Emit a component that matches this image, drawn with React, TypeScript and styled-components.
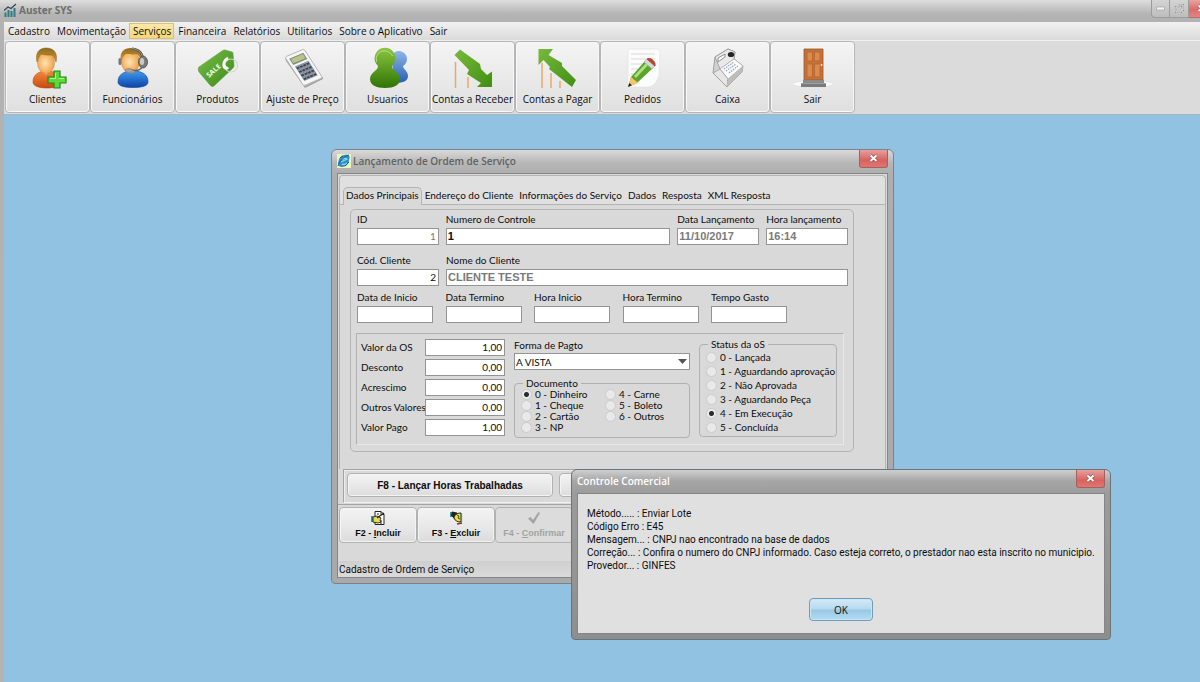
import React from "react";
import styled, { createGlobalStyle, css } from "styled-components";

const ui = `"Open Sans", "Noto Sans", sans-serif`;
const plain = `Roboto, "Liberation Sans", sans-serif`;
const classic = `Lato, "Liberation Sans", sans-serif`;
const classicWide = `"Liberation Sans", Arial, sans-serif`;

const GlobalStyle = createGlobalStyle`
  *, *::before, *::after { box-sizing: border-box; }
  body { margin: 0; font-family: ${ui}; font-size: 10px; color: #0c0c0c; }
  button, input, select { font: inherit; color: inherit; margin: 0; }
  fieldset { margin: 0; min-width: 0; }
`;

/* ---------- application shell ---------- */

const Shell = styled.div`
  min-height: 100vh;
  display: flex;
  flex-direction: column;
  padding-left: 4px;
  background: linear-gradient(#dedede, #b4b4b4 14px, #b2b2b2 22px, #b4b4b4);
  overflow: hidden;
`;

const AppTitleBar = styled.header`
  height: 22px;
  display: flex;
  align-items: flex-start;
  gap: 2px;
`;

const AppTitle = styled.h1`
  flex: 1;
  margin: 0;
  font-size: 10px;
  line-height: 21px;
  font-weight: 700;
  color: #6e6e6e;
`;

const WindowControls = styled.div`
  display: flex;
  margin-right: -15px;
`;

const WindowControl = styled.button<{ $close?: boolean }>`
  width: ${(p) => (p.$close ? 26 : 19)}px;
  height: 18px;
  padding: 0;
  display: flex;
  align-items: center;
  justify-content: center;
  border: 1px solid ${(p) => (p.$close ? "#b96a6a" : "#9c9c9c")};
  border-top: 0;
  border-left-width: 0;
  background: ${(p) =>
    p.$close
      ? "linear-gradient(#e8a3a0, #dc6c69 55%, #e28380)"
      : "linear-gradient(#d4d4d4, #bdbdbd)"};
  &:first-child { border-left-width: 1px; border-bottom-left-radius: 4px; }
`;

const MenuBar = styled.nav`
  height: 18px;
  padding-top: 1px;
  display: flex;
  align-items: flex-start;
  background: linear-gradient(#f1f1f1, #dadada);
`;

const MenuItem = styled.button<{ $active?: boolean }>`
  height: 16px;
  padding: 0 2px 0 3px;
  border: 1px solid ${(p) => (p.$active ? "#dcc078" : "transparent")};
  background: ${(p) => (p.$active ? "linear-gradient(#fbe9a8, #f3d67c)" : "none")};
  line-height: 13px;
  white-space: nowrap;
`;

const ToolBar = styled.div`
  height: 75px;
  padding: 0 1px 3px;
  display: flex;
  background: #dbdbdb;
  border-top: 1px solid #efefef;
  border-bottom: 1px solid #a9b6be;
`;

const ToolButton = styled.button`
  width: 85px;
  height: 72px;
  padding: 5px 0 0;
  display: flex;
  flex-direction: column;
  align-items: center;
  gap: 3px;
  border: 1px solid #b5b5b5;
  border-radius: 4px;
  background: linear-gradient(#f4f4f4, #ebebeb 45%, #dfdfdf);
  box-shadow: inset 0 0 0 1px #f8f8f8;
  font-size: 10px;
  line-height: 14px;
  font-weight: 500;
  white-space: nowrap;
`;

const Desktop = styled.main`
  flex: 1;
  position: relative;
  background: #92c2e1;
`;

/* ---------- windows placed on the desktop ---------- */

const Window = styled.section<{ $x: number; $y: number; $w: number; $front?: boolean }>`
  position: absolute;
  left: ${(p) => p.$x}px;
  top: ${(p) => p.$y}px;
  width: ${(p) => p.$w}px;
  display: flex;
  flex-direction: column;
  padding: 0 5px 5px;
  border: 1px solid ${(p) => (p.$front ? "#6d7478" : "#7b8387")};
  border-radius: 6px 6px 4px 4px;
  background: ${(p) =>
    p.$front
      ? "linear-gradient(#cfcfcf, #a6a6a6 11px, #9b9b9b 24px, #8d8f8f)"
      : "linear-gradient(#dadada, #b6b6b6 13px, #aeaeae 24px, #a9a9a9)"};
`;

const WindowBar = styled.header`
  height: 23px;
  display: flex;
  align-items: flex-start;
  gap: 2px;
`;

const WindowTitle = styled.h2<{ $front?: boolean }>`
  flex: 1;
  margin: 0;
  font-size: 10px;
  line-height: 22px;
  font-weight: 600;
  color: ${(p) => (p.$front ? "#ffffff" : "#626262")};
`;

const CloseButton = styled.button`
  width: 29px;
  height: 18px;
  padding: 0;
  display: flex;
  align-items: center;
  justify-content: center;
  border: 1px solid #a95f5f;
  border-top: 0;
  border-radius: 0 0 3px 3px;
  background: linear-gradient(#e6a09e, #d9625f 60%, #df7674);
`;

const ClientArea = styled.div`
  display: flex;
  flex-direction: column;
  border: 1px solid #858585;
  background: #d9d9d9;
`;

/* ---------- service order form ---------- */

const PageControl = styled.div`
  margin: 1px 1px 0;
  height: 294px;
  border: 1px solid #b4b4b4;
  border-bottom: 0;
  border-radius: 4px 4px 0 0;
  background: #d9d9d9;
`;

const TabStrip = styled.div`
  height: 29px;
  padding: 11px 3px 0;
  display: flex;
  align-items: flex-start;
  background: #e0e0e0;
  box-shadow: inset 0 -1px #b4b4b4;
  border-radius: 4px 4px 0 0;
`;

const Tab = styled.button<{ $active?: boolean }>`
  height: 18px;
  padding: 0 2px 2px;
  font-family: ${classic};
  font-size: 10px;
  line-height: 15px;
  white-space: nowrap;
  border: 1px solid ${(p) => (p.$active ? "#b4b4b4" : "transparent")};
  border-bottom: 0;
  border-radius: 5px 5px 0 0;
  background: ${(p) => (p.$active ? "#d9d9d9" : "none")};
`;

const FormBox = styled.form`
  margin: 4px 0 0 10px;
  width: 504px;
  height: 243px;
  padding: 2px 5px 0 6px;
  border: 1px solid #b4b4b4;
  border-radius: 5px;
  font-family: ${classic};
  font-size: 10px;
`;

const FieldRow = styled.div<{ $top?: number; $spread?: number }>`
  display: flex;
  gap: 7px;
  width: ${(p) => (p.$spread ? `${p.$spread}px` : "auto")};
  justify-content: space-between;
  margin-top: ${(p) => p.$top ?? 0}px;
`;

const Field = styled.div<{ $w: number }>`
  width: ${(p) => p.$w}px;
  display: flex;
  flex-direction: column;
  gap: 1px;
`;

const Label = styled.label`
  line-height: 15px;
  white-space: nowrap;
`;

const TextBox = styled.input<{ $right?: boolean; $bold?: boolean; $dim?: boolean }>`
  width: 100%;
  height: 17px;
  padding: 0 2px 1px 1px;
  border: 1px solid #949494;
  border-radius: 0;
  background: #fff;
  text-align: ${(p) => (p.$right ? "right" : "left")};
  color: ${(p) => (p.$dim ? "#7a7a7a" : "#0c0c0c")};
  ${(p) =>
    p.$bold &&
    css`
      font-family: ${classicWide};
      font-size: 11px;
      font-weight: 700;
    `}
`;

const ValuesPanel = styled.div`
  margin: 10px 4px 0 -1px;
  height: 112px;
  padding: 4px 5px 0 4px;
  display: flex;
  align-items: flex-start;
  border: 1px solid #b0b0b0;
  border-right-color: #e8e8e8;
  border-bottom-color: #e8e8e8;
`;

const AmountGrid = styled.div`
  width: 144px;
  padding-top: 1px;
  display: grid;
  grid-template-columns: 64px 80px;
  grid-auto-rows: 17px;
  row-gap: 3px;
  align-items: center;
`;

const PaymentColumn = styled.div`
  width: 176px;
  margin-left: 9px;
`;

const Combo = styled.div`
  position: relative;
  svg { position: absolute; right: 3px; top: 6px; pointer-events: none; }
`;

const Select = styled.select`
  display: block;
  width: 100%;
  height: 17px;
  padding: 0 1px;
  appearance: none;
  border: 1px solid #949494;
  border-radius: 0;
  background: #fff;
`;

const OptionGroup = styled.fieldset<{ $h: number; $top: number }>`
  height: ${(p) => p.$h}px;
  margin-top: ${(p) => p.$top}px;
  padding: 0 0 0 6px;
  border: 1px solid #b0b0b0;
  border-radius: 4px;
  legend {
    margin-left: 2px;
    padding: 0 3px;
    line-height: 12px;
  }
`;

const OptionGrid = styled.div<{ $row: number; $rows: number; $col?: number }>`
  display: grid;
  grid-auto-flow: column;
  grid-template-rows: repeat(${(p) => p.$rows}, ${(p) => p.$row}px);
  grid-auto-columns: ${(p) => (p.$col ? `${p.$col}px` : "auto")};
`;

const Option = styled.label`
  display: flex;
  align-items: center;
  gap: 3px;
  line-height: 11px;
  white-space: nowrap;
`;

const Radio = styled.input`
  appearance: none;
  flex: none;
  width: 11px;
  height: 11px;
  border: 1px solid #cbcbcb;
  border-radius: 50%;
  background: #e9e9e9;
  &:checked { background: radial-gradient(circle, #2b2b2b 2px, #ececec 3px); }
`;

const StatusColumn = styled.div`
  width: 138px;
  margin-left: 9px;
`;

const ActionStrip = styled.div`
  height: 34px;
  margin: 0 0 0 5px;
  padding: 3px;
  display: flex;
  gap: 6px;
  border: 1px solid #a4a4a4;
  border-bottom-color: #f2f2f2;
  box-shadow: inset 1px 1px #ececec;
`;

const buttonFace = css`
  border: 1px solid #b2b2b2;
  border-radius: 4px;
  background: linear-gradient(#f3f3f3, #e9e9e9 50%, #dcdcdc);
  box-shadow: inset 0 0 0 1px #f4f4f4;
`;

const WideButton = styled.button`
  ${buttonFace}
  width: 206px;
  height: 24px;
  padding: 0;
  font-family: ${classicWide};
  font-size: 10px;
  font-weight: 700;
`;

const RecordBar = styled.div`
  height: 57px;
  margin-top: 1px;
  padding: 2px 0 0 1px;
  display: flex;
  align-items: flex-start;
  border-top: 1px solid #a4a4a4;
`;

const RecordButton = styled.button`
  ${buttonFace}
  width: 78px;
  height: 36px;
  padding: 2px 0 0;
  display: flex;
  flex-direction: column;
  align-items: center;
  font-family: ${classicWide};
  font-size: 9px;
  line-height: 15px;
  font-weight: 700;
  white-space: nowrap;
  &:disabled { color: #a2a2a2; background: #dcdcdc; box-shadow: none; }
`;

const StatusBar = styled.footer`
  height: 16px;
  padding-left: 1px;
  background: linear-gradient(#cfcfcf, #dadada);
  line-height: 18px;
  font-family: ${plain};
`;

/* ---------- message box ---------- */

const MessageArea = styled(ClientArea)`
  height: 141px;
  padding-top: 13px;
  background: #e0e0e0;
`;

const MessageText = styled.p`
  margin: 0;
  padding-left: 9px;
  flex: 1;
  line-height: 13px;
  font-family: ${plain};
  white-space: pre;
`;

const OkButton = styled.button`
  width: 64px;
  height: 23px;
  margin: 0 auto 12px;
  padding: 0;
  border: 1px solid #6f9dbb;
  border-radius: 4px;
  background: linear-gradient(#d6eaf6, #b5d9ef 48%, #98c8e6 52%, #b4dcf1);
  box-shadow: inset 0 0 0 1px #c9e5f5;
`;

/* ---------- drawings ---------- */

const Art = ({ children }: { children: React.ReactNode }) => (
  <svg width="42" height="42" viewBox="0 0 42 42" fill="none" aria-hidden="true">
    {children}
  </svg>
);

const ClientArt = () => (
  <Art>
    <defs>
      <radialGradient id="cSkin" cx=".45" cy=".5"><stop stopColor="#ffe3b4" /><stop offset="1" stopColor="#f2a64f" /></radialGradient>
      <linearGradient id="cBody" x2="0" y2="1"><stop stopColor="#f28a3c" /><stop offset="1" stopColor="#c94a12" /></linearGradient>
      <linearGradient id="cHair" x2="0" y2="1"><stop stopColor="#8f6a1c" /><stop offset="1" stopColor="#d29a35" /></linearGradient>
    </defs>
    <path d="M6 35c0-7 5-11 14-11s13 5 13 11c0 4-5 6-13 6S6 39 6 35z" fill="url(#cBody)" stroke="#b7461a" strokeWidth=".6" />
    <path d="M15 23l4 5 4-5z" fill="#d9c9bb" />
    <ellipse cx="19" cy="16" rx="8.5" ry="10.5" fill="url(#cSkin)" stroke="#c98532" strokeWidth=".5" />
    <path d="M10 15C8 6 12 1 19 1c8 0 12 5 10 14-1-3-2-5-4-7-4 0-8 0-11-1-2 2-3 5-4 8z" fill="url(#cHair)" stroke="#7f5c18" strokeWidth=".5" />
    <path d="M27 24h6v6h6v6h-6v5h-6v-5h-6v-6h6z" fill="#5fd83a" stroke="#1f8a16" strokeWidth="1.2" />
    <path d="M28.5 26v5.500H23M32 31.500h5" stroke="#b8f59a" strokeWidth="1" />
  </Art>
);

const StaffArt = () => (
  <Art>
    <defs>
      <linearGradient id="sBody" x2="0" y2="1"><stop stopColor="#3f9bf0" /><stop offset="1" stopColor="#0b44a8" /></linearGradient>
    </defs>
    <path d="M6 35c0-7 5-11 15-11s15 4 15 11c0 4-6 5.500-15 5.500S6 39 6 35z" fill="url(#sBody)" stroke="#0d3f94" strokeWidth=".6" />
    <ellipse cx="18.500" cy="15" rx="9" ry="11" fill="url(#cSkin)" stroke="#c98532" strokeWidth=".5" />
    <path d="M9 14C7 5 12 1 19 1c9 0 14 4 12 14-2-3-4-6-6-8-4 1-8 0-11 0-2 1-4 4-5 7z" fill="url(#cHair)" />
    <path d="M20 1.500c7 1 11 5 11 12" stroke="#4e4e4e" strokeWidth="2.200" />
    <path d="M20 1.500c7 1 11 5 11 12" stroke="#b5b5b5" strokeWidth=".8" />
    <ellipse cx="31" cy="15" rx="4.500" ry="6" fill="#7a7a7a" stroke="#4a4a4a" strokeWidth=".8" />
    <ellipse cx="30" cy="14.500" rx="2.200" ry="3.500" fill="#c9c9c9" />
    <rect x="6.500" y="11" width="3" height="7" rx="1.500" fill="#777" />
    <path d="M30 20c-2 4-6 4-11 3" stroke="#666" strokeWidth="1.500" />
    <ellipse cx="17" cy="23.500" rx="4" ry="2" fill="#a8a29c" stroke="#77706a" strokeWidth=".5" />
  </Art>
);

const ProductArt = () => (
  <Art>
    <defs>
      <linearGradient id="pTag" x2="1" y2="1"><stop stopColor="#79bd4a" /><stop offset="1" stopColor="#3c8a17" /></linearGradient>
    </defs>
    <path d="M2 20L25 4c1-1 2-1 3-1l7 2c1 0 1 1 1 2l1 11c0 1 0 2-1 3L18 38c-2 2-3 2-5 0L2 25c-1-2-1-4 0-5z" fill="url(#pTag)" stroke="#5c9d36" strokeWidth=".6" />
    <circle cx="34" cy="18.500" r="6.500" stroke="#d2d2d2" strokeWidth="1.100" />
    <path d="M30 10c-5 3-6 9-3 12 2 1 4 1 5-1l-3-2c-1-2-1-5 2-6 1-1 0-3-1-3z" fill="#fff" />
    <text x="12" y="31" transform="rotate(-42 12 31)" fill="#f3fbe9" fontFamily="Open Sans, sans-serif" fontWeight="700" fontSize="7">SALE</text>
  </Art>
);

const PriceArt = () => (
  <Art>
    <path d="M3 11l1 3 19 27 18-9v-2L23 39z" fill="#a2a2a2" />
    <g transform="matrix(1 -.42 .58 .9 3 10)">
      <rect width="19" height="32" rx="1.500" fill="#f6f6f6" stroke="#a9a9a9" strokeWidth=".7" />
      <rect x="2.500" y="3" width="14" height="7" fill="#838c7c" />
      <rect x="3.500" y="4" width="12" height="4.500" fill="#b9c48c" />
      <rect x="3" y="12" width="13.500" height="16" fill="#8a8f97" />
      <path d="M3.500 14h12.500M3.500 18h12.500M3.500 22h12.500M3.500 26h12.500" stroke="#3a4454" strokeWidth="2.400" strokeDasharray="2.400 .9" />
      <path d="M3.500 13h12.500M3.500 17h12.500M3.500 21h12.500M3.500 25h12.500" stroke="#a9b6c8" strokeWidth=".7" strokeDasharray="2.400 .9" />
    </g>
  </Art>
);

const UsersArt = () => (
  <Art>
    <defs>
      <linearGradient id="uGreen" x2="0" y2="1"><stop stopColor="#8cc63f" /><stop offset="1" stopColor="#2f7406" /></linearGradient>
      <linearGradient id="uBlue" x2="0" y2="1"><stop stopColor="#8fb6e6" /><stop offset="1" stopColor="#255fb3" /></linearGradient>
    </defs>
    <path d="M24 12a8 8 0 1 1 12 7c0 3 5 5 5 10s-5 7-12 7z" fill="url(#uBlue)" />
    <path d="M11 19A10.500 10.500 0 1 1 25 19c0 5 8 6 8 13 0 6-6 9-15 9S3 38 3 32c0-7 8-8 8-13z" fill="url(#uGreen)" />
    <path d="M9.500 15a9 9 0 0 1 2-9 9 9 0 0 1 14 3" stroke="#c4e69c" strokeWidth=".8" />
  </Art>
);

const ReceiveArt = () => (
  <Art>
    <defs>
      <linearGradient id="aGreen" x2="1" y2="1"><stop stopColor="#79b93c" /><stop offset="1" stopColor="#3f8f12" /></linearGradient>
    </defs>
    <path d="M3.500 15v26M16 30v11" stroke="#efa860" strokeWidth="1.500" />
    <path d="M2.500 8L8 2.500 28 17l1 5 6 6 5-3.500V40H25l4-4-14-9 2-4z" fill="url(#aGreen)" />
  </Art>
);

const PayArt = () => (
  <Art>
    <path d="M5 16v25M14 26v15M23 34v7" stroke="#efa860" strokeWidth="1.500" />
    <path d="M1.500 2H16l-4.500 6L25 16v3l14 14-4 7-23-18 1-2-6.500-7-5 5z" fill="url(#aGreen)" />
  </Art>
);

const OrdersArt = () => (
  <Art>
    <path d="M6 4c0-1 1-2 2-2h27c1 0 3 1 3 3l-1 23c-2 8-6 11-10 12H8c-1 0-2-1-2-2z" fill="#fcfcfc" stroke="#e3e3e3" strokeWidth=".7" />
    <path d="M9 7h24M9 12h24M9 17h18M9 22h14M9 27h8" stroke="#d5d9dd" strokeWidth="1" />
    <path d="M6 40l3-10 14-16 8 7-16 15z" fill="#5ca52c" />
    <path d="M12 29l13-14 2 2-13 14z" fill="#b3dd86" />
    <path d="M6 40l3-10 7 6z" fill="#f3c66e" />
    <path d="M6 40l1.300-4 2.700 2.300z" fill="#222" />
    <path d="M22 15l3-3 8 7-3 3z" fill="#d4d8dc" stroke="#9a9a9a" strokeWidth=".5" />
    <path d="M25 12c3-2 9 2 8 7z" fill="#b9452c" stroke="#b9452c" />
  </Art>
);

const RegisterArt = () => (
  <Art>
    <path d="M6 26L8 10 21 2l7 3-1 7 9 7-1 6-15 15z" fill="#d2d2d2" stroke="#8e8e8e" strokeWidth=".8" />
    <path d="M8 10l13-8 7 3-1 7-14 10z" fill="#e9e9e9" stroke="#8a8a8a" strokeWidth=".7" />
    <path d="M11 11l7-4v3l-7 5z" fill="#f8f8f8" stroke="#777" strokeWidth=".8" />
    <ellipse cx="24" cy="7.500" rx="3.200" ry="2.600" fill="#242424" />
    <path d="M13 22l14-10 9 7-15 13z" fill="#fafafa" stroke="#aaa" strokeWidth=".6" />
    <path d="M17 22l10-7M19 24l10-7M22 26l9-7" stroke="#8fa3b8" strokeWidth="1.200" strokeDasharray="1.500 1" />
    <path d="M6 26l7-4 8 10-1 8zM20 34l15-13" stroke="#999" strokeWidth=".8" fill="#e6e6e6" />
    <path d="M20 40l1-8 15-13-1 6z" fill="#bdbdbd" />
  </Art>
);

const DoorArt = () => (
  <Art>
    <ellipse cx="21" cy="37" rx="20" ry="3.500" fill="#fafafa" stroke="#d4d4d4" strokeWidth=".5" />
    <path d="M12 2h19v31H12z" fill="#c87137" stroke="#8e5a35" strokeWidth=".8" />
    <path d="M15 5h5.500v9H15zM22.500 5H28v9h-5.500zM15 17h5.500v13H15zM22.500 17H28v13h-5.500z" fill="#d98a4c" stroke="#b0612c" strokeWidth=".7" />
    <circle cx="29.500" cy="18" r="1" fill="#f1e5d0" />
    <path d="M11 33h21v3H11z" fill="#8b8b8b" />
    <path d="M9 36h25v4H9z" fill="#7b7b7b" />
    <path d="M9 36.500h25" stroke="#a8a8a8" strokeWidth=".8" />
  </Art>
);

const Logo = () => (
  <svg width="13" height="22" viewBox="0 0 13 22" fill="none" aria-hidden="true">
    <path d="M.5 12.500h2V17h-2zM3.500 10h2v7h-2zM6.500 11h2v6h-2zM9.500 8h2v9h-2z" fill="#2f7f86" />
    <path d="M0 10.500L4 7l3 1.500L12 4" stroke="#31454c" strokeWidth="1.100" />
  </svg>
);

const FormIconArt = styled.svg`
  margin-top: 4px;
`;

const FormIcon = () => (
  <FormIconArt width="14" height="14" viewBox="0 0 14 14" fill="none" aria-hidden="true">
    <path d="M0 0h14v14H0z" fill="#f0f4b4" />
    <path d="M2 5c2-4 6-5 9-4 2 1 2 3 1 5 0 4-3 7-7 7-3 0-4-2-4-4z" fill="#2a92cb" />
    <path d="M5 6c1-2 4-2 5-1L4 8M5 10c2 1 4 0 5-1" stroke="#8fd4f0" strokeWidth="1.200" />
    <path d="M1 12C2 8 7 2 12 1M3 4l3-2M8 12l4-4" stroke="#14608f" strokeWidth="1" />
  </FormIconArt>
);

const Cross = ({ size = 9 }: { size?: number }) => (
  <svg width={size} height={size} viewBox="0 0 9 9" fill="none" aria-hidden="true">
    <path d="M1.500 1.500l6 5.500M7.500 1.500l-6 5.500" stroke="#8d4a4a" strokeWidth="3.200" />
    <path d="M1.500 1.500l6 5.500M7.500 1.500l-6 5.500" stroke="#fff" strokeWidth="2" />
  </svg>
);

const IncludeArt = () => (
  <svg width="16" height="16" viewBox="0 0 16 16" fill="none" aria-hidden="true">
    <path d="M5 1.500h6l3 3v10H5z" fill="#fff" stroke="#222" />
    <path d="M11 1.500v3h3M7 4h2M9 11h3M10 13h2" stroke="#222" />
    <path d="M1 6h2v6H1z" fill="#2b9b9b" />
    <path d="M3 7l4-1 4 2-1 2 1 2-3 1-5-1z" fill="#e8dc4a" stroke="#222" strokeWidth=".9" />
    <path d="M7 8l7-5" stroke="#222" strokeWidth="1.300" />
  </svg>
);

const DeleteArt = () => (
  <svg width="16" height="16" viewBox="0 0 16 16" fill="none" aria-hidden="true">
    <path d="M2 2h2v5H2z" fill="#2b9b9b" />
    <path d="M4 1.500l5 1 1 4-4 2-3-3z" fill="#222" />
    <path d="M6 8c0-3 3-5 7-5v9c-3 0-6-1-7-4z" fill="#e8e23c" stroke="#222" strokeWidth="1" />
    <path d="M9 5l2 1-1 2 2 1" stroke="#222" strokeWidth=".8" />
    <path d="M9 14l5-1" stroke="#9c2b2b" strokeWidth="1.500" />
    <path d="M13.500 3v10" stroke="#2b9b9b" strokeWidth="1.200" />
  </svg>
);

const CheckArt = () => (
  <svg width="16" height="16" viewBox="0 0 16 16" fill="none" aria-hidden="true">
    <path d="M2 8.500L4.500 7 7 10l5.500-8 1.500 1L7.500 14z" fill="#a3a3a3" />
  </svg>
);

/* ---------- data ---------- */

const menus = ["Cadastro", "Movimentação", "Serviços", "Financeira", "Relatórios", "Utilitarios", "Sobre o Aplicativo", "Sair"];

const tools: [string, () => React.JSX.Element][] = [
  ["Clientes", ClientArt],
  ["Funcionários", StaffArt],
  ["Produtos", ProductArt],
  ["Ajuste de Preço", PriceArt],
  ["Usuarios", UsersArt],
  ["Contas a Receber", ReceiveArt],
  ["Contas a Pagar", PayArt],
  ["Pedidos", OrdersArt],
  ["Caixa", RegisterArt],
  ["Sair", DoorArt],
];

const tabs = ["Dados Principais", "Endereço do Cliente", "Informações do Serviço", "Dados", "Resposta", "XML Resposta"];
const periods = ["Data de Inicio", "Data Termino", "Hora Inicio", "Hora Termino", "Tempo Gasto"];
const amounts: [string, string][] = [
  ["Valor da OS", "1,00"],
  ["Desconto", "0,00"],
  ["Acrescimo", "0,00"],
  ["Outros Valores", "0,00"],
  ["Valor Pago", "1,00"],
];
const documents = ["0 - Dinheiro", "1 - Cheque", "2 - Cartão", "3 - NP", "4 - Carne", "5 - Boleto", "6 - Outros"];
const statuses = ["0 - Lançada", "1 - Aguardando aprovação", "2 - Não Aprovada", "3 - Aguardando Peça", "4 - Em Execução", "5 - Concluída"];

const message = `Método..... : Enviar Lote
Código Erro : E45
Mensagem... : CNPJ nao encontrado na base de dados
Correção... : Confira o numero do CNPJ informado. Caso esteja correto, o prestador nao esta inscrito no municipio.
Provedor... : GINFES`;

type TextFieldProps = {
  id: string;
  label: string;
  width: number;
  value?: string;
  right?: boolean;
  bold?: boolean;
  dim?: boolean;
};

const TextField = ({ id, label, width, value = "", right, bold, dim }: TextFieldProps) => (
  <Field $w={width}>
    <Label htmlFor={id}>{label}</Label>
    <TextBox id={id} defaultValue={value} $right={right} $bold={bold} $dim={dim} />
  </Field>
);

const OrderWindow = () => (
  <Window $x={327} $y={34} $w={563}>
    <WindowBar>
      <FormIcon />
      <WindowTitle>Lançamento de Ordem de Serviço</WindowTitle>
      <CloseButton aria-label="Fechar"><Cross /></CloseButton>
    </WindowBar>
    <ClientArea>
      <PageControl>
        <TabStrip role="tablist">
          {tabs.map((t, i) => (
            <Tab key={t} role="tab" aria-selected={i === 0} $active={i === 0}>{t}</Tab>
          ))}
        </TabStrip>
        <FormBox>
          <FieldRow>
            <TextField id="id" label="ID" width={82} value="1" right dim />
            <TextField id="control" label="Numero de Controle" width={225} value="1" bold />
            <TextField id="date" label="Data Lançamento" width={82} value="11/10/2017" bold dim />
            <TextField id="hour" label="Hora lançamento" width={82} value="16:14" bold dim />
          </FieldRow>
          <FieldRow $top={8}>
            <TextField id="client" label="Cód. Cliente" width={82} value="2" right />
            <TextField id="name" label="Nome do Cliente" width={402} value="CLIENTE TESTE" bold dim />
          </FieldRow>
          <FieldRow $top={4} $spread={430}>
            {periods.map((p, i) => (
              <TextField key={p} id={`period-${i}`} label={p} width={76} />
            ))}
          </FieldRow>
          <ValuesPanel>
            <AmountGrid>
              {amounts.map(([label, value], i) => (
                <React.Fragment key={label}>
                  <Label htmlFor={`amount-${i}`}>{label}</Label>
                  <TextBox id={`amount-${i}`} defaultValue={value} $right />
                </React.Fragment>
              ))}
            </AmountGrid>
            <PaymentColumn>
              <Label htmlFor="payment">Forma de Pagto</Label>
              <Combo>
                <Select id="payment" defaultValue="A VISTA"><option>A VISTA</option></Select>
                <svg width="9" height="5" viewBox="0 0 9 5" aria-hidden="true"><path d="M0 0h9L4.500 5z" fill="#555" /></svg>
              </Combo>
              <OptionGroup $h={61} $top={7}>
                <legend>Documento</legend>
                <OptionGrid $rows={4} $row={11} $col={84}>
                  {documents.map((d, i) => (
                    <Option key={d}><Radio type="radio" name="document" defaultChecked={i === 0} />{d}</Option>
                  ))}
                </OptionGrid>
              </OptionGroup>
            </PaymentColumn>
            <StatusColumn>
              <OptionGroup $h={99} $top={0}>
                <legend>Status da oS</legend>
                <OptionGrid $rows={6} $row={14}>
                  {statuses.map((s, i) => (
                    <Option key={s}><Radio type="radio" name="status" defaultChecked={i === 4} />{s}</Option>
                  ))}
                </OptionGrid>
              </OptionGroup>
            </StatusColumn>
          </ValuesPanel>
        </FormBox>
      </PageControl>
      <ActionStrip>
        <WideButton>F8 - Lançar Horas Trabalhadas</WideButton>
        <WideButton aria-label="Serviços" />
      </ActionStrip>
      <RecordBar>
        <RecordButton><IncludeArt /><span>F2 - <u>I</u>ncluir</span></RecordButton>
        <RecordButton><DeleteArt /><span>F3 - <u>E</u>xcluir</span></RecordButton>
        <RecordButton disabled><CheckArt /><span>F4 - <u>C</u>onfirmar</span></RecordButton>
      </RecordBar>
      <StatusBar>Cadastro de Ordem de Serviço</StatusBar>
    </ClientArea>
  </Window>
);

const MessageBox = () => (
  <Window $x={567} $y={354} $w={540} $front role="alertdialog" aria-labelledby="msg-title">
    <WindowBar>
      <WindowTitle id="msg-title" $front>Controle Comercial</WindowTitle>
      <CloseButton aria-label="Fechar"><Cross /></CloseButton>
    </WindowBar>
    <MessageArea>
      <MessageText>{message}</MessageText>
      <OkButton>OK</OkButton>
    </MessageArea>
  </Window>
);

export default function App() {
  return (
    <Shell>
      <GlobalStyle />
      <AppTitleBar>
        <Logo />
        <AppTitle>Auster SYS</AppTitle>
        <WindowControls>
          <WindowControl aria-label="Minimizar">
            <svg width="9" height="5" viewBox="0 0 9 5" aria-hidden="true"><path d="M.5 1h8v3h-8z" fill="#f4f4f4" stroke="#999" strokeWidth=".6" /></svg>
          </WindowControl>
          <WindowControl aria-label="Restaurar">
            <svg width="9" height="9" viewBox="0 0 9 9" fill="none" aria-hidden="true">
              <path d="M3 1h5v5H6M1 3h5v5H1z" stroke="#8f8f8f" strokeWidth="2" />
              <path d="M3 1h5v5H6M1 3h5v5H1z" stroke="#ececec" />
            </svg>
          </WindowControl>
          <WindowControl aria-label="Fechar" $close><Cross /></WindowControl>
        </WindowControls>
      </AppTitleBar>
      <MenuBar>
        {menus.map((m) => (
          <MenuItem key={m} $active={m === "Serviços"}>{m}</MenuItem>
        ))}
      </MenuBar>
      <ToolBar>
        {tools.map(([name, Picture]) => (
          <ToolButton key={name}><Picture />{name}</ToolButton>
        ))}
      </ToolBar>
      <Desktop>
        <OrderWindow />
        <MessageBox />
      </Desktop>
    </Shell>
  );
}
